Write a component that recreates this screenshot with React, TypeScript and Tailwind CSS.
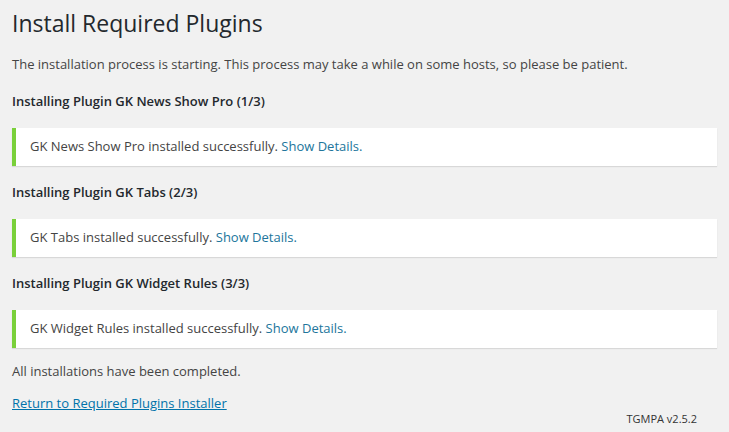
const plugins = [
  { name: 'GK News Show Pro', step: '1/3' },
  { name: 'GK Tabs', step: '2/3' },
  { name: 'GK Widget Rules', step: '3/3' },
];

export default function App() {
  return (
    <div className="min-h-[432px] w-full bg-[#f1f1f1] pl-3 pr-3 text-[13px] text-[#444] [font-family:'Open_Sans',sans-serif]">
      <h1 className="pt-[9px] pb-[4px] text-[23px] leading-[29px] font-normal text-[#23282d]">
        Install Required Plugins
      </h1>
      <p className="mt-[13px] leading-[19.5px]">
        The installation process is starting. This process may take a while on some hosts, so please be patient.
      </p>

      {plugins.map((p) => (
        <div key={p.name}>
          <h4 className="mt-4 mb-[17px] text-[13px] leading-5 font-semibold text-[#23282d]">
            Installing Plugin {p.name} ({p.step})
          </h4>
          <div className="w-[705px] border-l-4 border-[#7ad03a] bg-white px-3 py-[1px] shadow-[0_1px_1px_0_rgba(0,0,0,0.1)]">
            <p className="my-[6.5px] p-[2px] leading-[19px]">
              {p.name} installed successfully.{' '}
              <a href="#" className="text-[#21759b]">
                Show Details.
              </a>
            </p>
          </div>
        </div>
      ))}

      <p className="mt-[13px] leading-5">All installations have been completed.</p>
      <div className="flex items-start justify-between">
        <a href="#" className="mt-3 leading-5 text-[#0073aa] underline">
          Return to Required Plugins Installer
        </a>
        <span className="mt-[28px] mr-5 text-[11px] leading-5 text-[#333]">TGMPA v2.5.2</span>
      </div>
    </div>
  );
}
